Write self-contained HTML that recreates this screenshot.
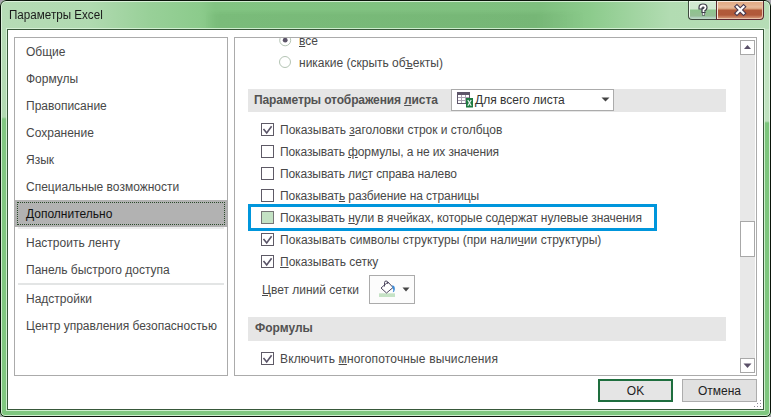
<!DOCTYPE html>
<html><head><meta charset="utf-8">
<style>
*{box-sizing:border-box;margin:0;padding:0}
html,body{width:771px;height:417px;overflow:hidden;background:#a8a4ae}
body{position:relative;font-family:"Liberation Sans",sans-serif;font-size:12px;color:#484848}
.a{position:absolute}
.t{position:absolute;white-space:nowrap;line-height:14px}
#win{left:0;top:0;width:771px;height:417px;border-radius:6px 6px 5px 5px;overflow:hidden}
#hl{left:0;top:0;width:771px;height:417px;border:1px solid #0a140a;border-radius:6px 6px 5px 5px;box-shadow:inset 0 0 0 1px rgba(230,248,230,.8)}
#inner{left:7px;top:29px;width:757px;height:381px;border:1px solid #38583a;background:#fff;box-shadow:0 0 0 1px rgba(220,244,220,.85)}
.panel{border:1px solid #ababab;background:#fff}
.nav{left:26px;color:#484848}
.sel{left:15px;top:200px;width:212px;height:27px;background:#b2b2b2}
.seldot{left:17px;top:202px;width:208px;height:23px;border:1px dotted #2a4a2a}
.band{background:#e6e6e6;height:23px}
.hdr{font-weight:bold;color:#525252}
.cb{width:13px;height:13px;border:1px solid #5e5a66;background:#fff}
.u{text-decoration:underline}
.btn{height:23px;width:75px;background:#e1e1e1;border:1px solid #adadad;text-align:center;line-height:20px;color:#222}
</style></head><body>
<div id="win" class="a">
  <div class="a" style="left:0;top:0;width:771px;height:29px;background:linear-gradient(90deg,#b6dcb6 0px,#b0dab0 90px,#98d098 150px,#8ccb8c 200px,#82c482 215px,#7ebf7e 540px,#8ccb8c 590px,#b2dcb2 670px,#b6ddb6 771px)"></div>
  <div class="a" style="left:205px;top:10px;width:380px;height:18px;background:linear-gradient(180deg,rgba(0,60,0,0) 0,rgba(0,60,0,.06) 5px,rgba(0,60,0,.06) 100%);-webkit-mask-image:linear-gradient(90deg,transparent 0,#000 15px,#000 330px,transparent 380px)"></div>
  <div class="a" style="left:0;top:29px;width:7px;height:388px;background:linear-gradient(180deg,#b6dcb6 0,#b2dab2 88px,#82c882 90px,#80c880 100%)"></div>
  <div class="a" style="left:763px;top:29px;width:8px;height:388px;background:linear-gradient(180deg,#c4e4c4 0,#bfe2bf 92px,#7cc67c 94px,#7ec77e 100%)"></div>
  <div class="a" style="left:0;top:409px;width:771px;height:8px;background:#7fc67f"></div>
  <div id="hl" class="a"></div>
</div>
<div class="t" style="left:9px;top:8px;color:#1a1a1a;transform:scaleX(0.97);transform-origin:0 0">Параметры Excel</div>
<!-- caption buttons -->
<div class="a" style="left:688px;top:1px;width:29px;height:19px;border:1px solid #3e4a3e;border-top:none;border-right:none;border-radius:0 0 0 4px;box-shadow:inset 1px 1px 0 #eef8ee;background:linear-gradient(180deg,#e6f3e6 0,#d2e9d2 1px,#d0e8d0 8px,#8ec48e 9px,#96be96 15px,#b8d4c8 17px,#c0dcc0 18px)"></div>
<div class="a" style="left:716px;top:1px;width:48px;height:19px;border:1px solid #5a2830;border-top:none;border-radius:0 0 4px 0;box-shadow:inset 1px 1px 0 #f8e8dc,inset -1px -1px 0 #e8c0a8;background:linear-gradient(180deg,#f0d0b8 0,#e2ac86 1px,#e4b28e 4px,#e8bc9c 6px,#daa078 8px,#b25a3a 9px,#b0583a 14px,#c88060 16px,#d89878 18px)"></div>
<svg class="a" style="left:688px;top:0" width="76" height="20" viewBox="0 0 76 20">
 <g fill="none" stroke-linecap="square"><path d="M12.5 7.5 Q12.5 5.5 15 5.5 Q17.5 5.5 17.5 7.5 Q17.5 9 15.5 10 L15.5 11" stroke="#3e3e4a" stroke-width="4.2"/>
 <rect x="14" y="12.5" width="3" height="3" fill="#3e3e4a"/>
 <path d="M12.5 7.5 Q12.5 5.5 15 5.5 Q17.5 5.5 17.5 7.5 Q17.5 9 15.5 10 L15.5 11" stroke="#fff" stroke-width="1.8"/>
 <rect x="14.6" y="13.1" width="1.8" height="1.8" fill="#fff"/></g>
 <path d="M49 6.8 L55.5 13.2 M55.5 6.8 L49 13.2" stroke="#4a3a50" stroke-width="4.4" stroke-linecap="square"/>
 <path d="M49 6.8 L55.5 13.2 M55.5 6.8 L49 13.2" stroke="#fff" stroke-width="2.2" stroke-linecap="square"/>
</svg>

<div id="inner" class="a"></div>

<!-- nav panel -->
<div class="a panel" style="left:14px;top:37px;width:214px;height:339px"></div>
<div class="t nav" style="top:45px">Общие</div>
<div class="t nav" style="top:72px">Формулы</div>
<div class="t nav" style="top:99px">Правописание</div>
<div class="t nav" style="top:126px">Сохранение</div>
<div class="t nav" style="top:153px">Язык</div>
<div class="t nav" style="top:180px">Специальные возможности</div>
<div class="a sel"></div>
<div class="a seldot"></div>
<div class="a" style="left:18px;top:227px;width:206px;height:2px;background:#eceded"></div>
<div class="t nav" style="top:207px;color:#111">Дополнительно</div>
<div class="t nav" style="top:236px">Настроить ленту</div>
<div class="t nav" style="top:263px">Панель быстрого доступа</div>
<div class="a" style="left:18px;top:283px;width:206px;height:2px;background:#e3e5e5"></div>
<div class="t nav" style="top:292px">Надстройки</div>
<div class="t nav" style="top:319px">Центр управления безопасностью</div>

<!-- content panel -->
<div class="a panel" style="left:234px;top:37px;width:523px;height:339px"></div>
<!-- radios -->
<svg class="a" style="left:278px;top:38px" width="14" height="32" viewBox="0 0 14 32">
 <circle cx="7.2" cy="2.3" r="5.5" fill="#fff" stroke="#b4c4b4" stroke-width="1"/>
 <circle cx="7.2" cy="2.2" r="2.4" fill="#5c5468"/>
 <circle cx="7" cy="24" r="5.5" fill="#fff" stroke="#b4c4b4" stroke-width="1"/>
</svg>
<div class="t" style="left:299px;top:34px"><span class="u">в</span>се</div>
<div class="t" style="left:299px;top:56px">никакие (скрыть об<span class="u">ъ</span>екты)</div>

<!-- section header 1 -->
<div class="a band" style="left:248px;top:89px;width:478px"></div>
<div class="t hdr" style="left:254px;top:93px;letter-spacing:-0.13px">Параметры отображения <span class="u">л</span>иста</div>
<div class="a" style="left:451px;top:89px;width:163px;height:22px;border:1px solid #ababab;background:#fff"></div>
<svg class="a" style="left:456px;top:91px" width="20" height="18" viewBox="0 0 20 18">
 <path d="M5.5 4v8M9.5 4v8M1 6.5h12M1 9.5h10" stroke="#aaa2b2" stroke-width="1"/>
 <rect x="1" y="1" width="13" height="3" fill="#5e566a"/>
 <rect x="1" y="1" width="1" height="12" fill="#5e566a"/>
 <rect x="1" y="12" width="9" height="1" fill="#5e566a"/>
 <rect x="13" y="1" width="1" height="6" fill="#5e566a"/>
 <rect x="10" y="7" width="7" height="9.5" fill="#1d7a40"/>
 <path d="M11.8 9 L15.2 14.8 M15.2 9 L11.8 14.8" stroke="#e8f4f0" stroke-width="1.2"/>
</svg>
<div class="t" style="left:475px;top:93px;color:#333">Для всего листа</div>
<svg class="a" style="left:601px;top:97px" width="9" height="5" viewBox="0 0 9 5"><path d="M0.5 0.5h8L4.5 4.5z" fill="#444"/></svg>

<!-- checkbox rows -->
<div class="a cb" style="left:261px;top:123px"></div>
<div class="a cb" style="left:261px;top:145px"></div>
<div class="a cb" style="left:261px;top:167px"></div>
<div class="a cb" style="left:261px;top:189px"></div>
<div class="a cb" style="left:261px;top:211px;background:#c4e2c4;border-color:#767676"></div>
<div class="a cb" style="left:261px;top:233px"></div>
<div class="a cb" style="left:261px;top:255px"></div>
<div class="a cb" style="left:261px;top:352px"></div>
<svg class="a" style="left:261px;top:0" width="13" height="417" viewBox="0 0 13 417">
 <g fill="none" stroke="#5a5468" stroke-width="1.6">
  <path d="M2.5 129 L5.7 133 L10.6 126.2"/>
  <path d="M2.5 239 L5.7 243 L10.6 236.2"/>
  <path d="M2.5 261 L5.7 265 L10.6 258.2"/>
  <path d="M2.5 358 L5.7 362 L10.6 355.2"/>
 </g>
</svg>
<div class="t" style="left:280px;top:123px">Показывать <span class="u">з</span>аголовки строк и столбцов</div>
<div class="t" style="left:280px;top:145px;letter-spacing:-0.11px">Показывать <span class="u">ф</span>ормулы, а не их значения</div>
<div class="t" style="left:280px;top:167px;letter-spacing:-0.1px">Показывать ли<span class="u">с</span>т справа налево</div>
<div class="t" style="left:280px;top:189px;letter-spacing:-0.08px">Показыват<span class="u">ь</span> разбиение на страницы</div>
<div class="a" style="left:248px;top:204px;width:409px;height:27px;border:3px solid #0096dc"></div>
<div class="t" style="left:280px;top:211px;letter-spacing:-0.085px">Показывать <span class="u">н</span>ули в ячейках, которые содержат нулевые значения</div>
<div class="t" style="left:280px;top:233px;letter-spacing:0.05px">Показывать символы структуры (при нали<span class="u">ч</span>ии структуры)</div>
<div class="t" style="left:280px;top:255px"><span class="u">П</span>оказывать сетку</div>
<div class="t" style="left:262px;top:283px"><span class="u">Ц</span>вет линий сетки</div>
<div class="a" style="left:369px;top:275px;width:46px;height:29px;border:1px solid #ababab;background:#fcfcfc"></div>
<svg class="a" style="left:378px;top:279px" width="20" height="20" viewBox="0 0 20 20">
 <rect x="1" y="14.5" width="16" height="3.5" fill="#cbe6cb"/>
 <path d="M1 15h16M1 17h16" stroke="#b9dcb9" stroke-width="0.6"/>
 <path d="M3 9 L10 3 L15 8.5 L8.5 14 Z" fill="#fff" stroke="#4e4860" stroke-width="1"/>
 <path d="M6.5 7.5 V3.6 a1.6 1.6 0 0 1 3.2 0 V5" fill="none" stroke="#4e4860" stroke-width="1"/>
 <path d="M14.2 6.2 Q17.3 6.6 16.8 10.8 Q16.4 13.4 14.8 13.2 Q15.8 10.2 14.3 8.2 Z" fill="#3b8ad6"/>
</svg>
<svg class="a" style="left:402px;top:287px" width="8" height="5" viewBox="0 0 8 5"><path d="M0.5 0.5h7L4 4.5z" fill="#444"/></svg>

<!-- section header 2 -->
<div class="a band" style="left:248px;top:317px;width:478px;height:24px"></div>
<div class="t hdr" style="left:255px;top:321px">Формулы</div>
<div class="t" style="left:280px;top:352px;letter-spacing:0.15px">Включить <span class="u">м</span>ногопоточные вычисления</div>

<!-- scrollbar -->
<div class="a" style="left:740px;top:40px;width:15px;height:333px;background:#e8e8e8"></div>
<div class="a" style="left:740px;top:40px;width:15px;height:15px;border:1px solid #a8a8a8;background:#fff"></div>
<div class="a" style="left:740px;top:358px;width:15px;height:15px;border:1px solid #a8a8a8;background:#fff"></div>
<div class="a" style="left:740px;top:221px;width:15px;height:36px;border:1px solid #a8a8a8;background:#fff"></div>
<svg class="a" style="left:740px;top:41px" width="15" height="332" viewBox="0 0 15 332">
 <path d="M4 8 L7.5 4 L11 8 Z" fill="#5a5068"/>
 <path d="M3.5 322.5 L11.5 322.5 L7.5 327 Z" fill="#5a5068"/>
</svg>

<!-- buttons -->
<div class="a btn" style="left:598px;top:379px;border:2px solid #1e6e3e;background:#e5e5e5;line-height:19px;padding-top:1px">OK</div>
<div class="a btn" style="left:682px;top:379px;padding-top:1px">Отмена</div>
<svg class="a" style="left:754px;top:400px" width="10" height="10" viewBox="0 0 10 10">
 <g fill="#8e8898"><rect x="6" y="0" width="1" height="1"/><rect x="3" y="3" width="1" height="1"/><rect x="6" y="3" width="1" height="1"/><rect x="0" y="6" width="1" height="1"/><rect x="3" y="6" width="1" height="1"/><rect x="6" y="6" width="1" height="1"/></g>
</svg>
</body></html>
